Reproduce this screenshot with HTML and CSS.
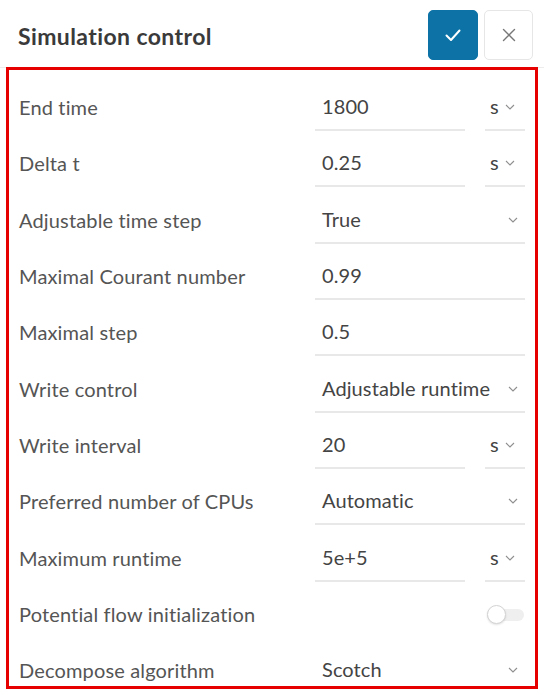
FILE: index.html
```html
<!DOCTYPE html>
<html>
<head>
<meta charset="utf-8">
<link rel="stylesheet" href="styles.css">
</head>
<body>
<div class="header">
  <div class="title">Simulation control</div>
  <div class="actions">
    <button class="btn btn-ok"><svg width="20" height="20" viewBox="0 0 20 20"><path d="M3.5 10.5 L8 15 L16.5 5.5" fill="none" stroke="#fff" stroke-width="2" stroke-linecap="round" stroke-linejoin="round"/></svg></button>
    <button class="btn btn-close"><svg width="14" height="14" viewBox="0 0 14 14"><path d="M1.5 1.5 L12.5 12.5 M12.5 1.5 L1.5 12.5" fill="none" stroke="#777" stroke-width="1.4" stroke-linecap="round"/></svg></button>
  </div>
</div>
<div class="panel">
  <div class="row"><div class="label">End time</div><div class="field">1800</div><div class="unit">s<svg class="chev" viewBox="0 0 10 6"><path d="M1 1 L5 5 L9 1"/></svg></div></div>
  <div class="row"><div class="label">Delta t</div><div class="field">0.25</div><div class="unit">s<svg class="chev" viewBox="0 0 10 6"><path d="M1 1 L5 5 L9 1"/></svg></div></div>
  <div class="row"><div class="label">Adjustable time step</div><div class="field wide">True<svg class="chev" viewBox="0 0 10 6"><path d="M1 1 L5 5 L9 1"/></svg></div></div>
  <div class="row"><div class="label">Maximal Courant number</div><div class="field wide">0.99</div></div>
  <div class="row"><div class="label">Maximal step</div><div class="field wide">0.5</div></div>
  <div class="row"><div class="label">Write control</div><div class="field wide">Adjustable runtime<svg class="chev" viewBox="0 0 10 6"><path d="M1 1 L5 5 L9 1"/></svg></div></div>
  <div class="row"><div class="label">Write interval</div><div class="field">20</div><div class="unit">s<svg class="chev" viewBox="0 0 10 6"><path d="M1 1 L5 5 L9 1"/></svg></div></div>
  <div class="row"><div class="label">Preferred number of CPUs</div><div class="field wide">Automatic<svg class="chev" viewBox="0 0 10 6"><path d="M1 1 L5 5 L9 1"/></svg></div></div>
  <div class="row"><div class="label">Maximum runtime</div><div class="field">5e+5</div><div class="unit">s<svg class="chev" viewBox="0 0 10 6"><path d="M1 1 L5 5 L9 1"/></svg></div></div>
  <div class="row"><div class="label">Potential flow initialization</div><div class="toggle-cell"><span class="toggle"><span class="knob"></span></span></div></div>
  <div class="row"><div class="label">Decompose algorithm</div><div class="field wide">Scotch<svg class="chev" viewBox="0 0 10 6"><path d="M1 1 L5 5 L9 1"/></svg></div></div>
</div>
</body>
</html>
```
FILE: styles.css
```css
* { box-sizing: border-box; }
html, body { margin: 0; padding: 0; background: #fff; }
body { font-family: Lato, "Open Sans", sans-serif; color: #555; width: 544px; height: 695px; overflow: hidden; }

.header {
  height: 68px;
  display: flex;
  align-items: center;
  justify-content: space-between;
  padding: 0 11px 0 18px;
  border-bottom: 1px solid #ececec;
}
.title { font-size: 23px; font-weight: 700; color: #3a3a3a; letter-spacing: 0.4px; margin-top: 4px; }
.actions { display: flex; gap: 6px; margin-top: 2px; }
.btn {
  width: 50px; height: 50px; border-radius: 5px; padding: 0;
  display: flex; align-items: center; justify-content: center; cursor: pointer;
}
.btn-ok { background: #0d73a7; border: 1px solid #0d73a7; }
.btn-close { background: #fff; border: 1px solid #e6e6e6; width: 49px; }

.panel {
  margin: -1px 6px 0 6px;
  height: 622px;
  border: 3px solid #e60000;
  padding: 9px 10px 0 10px;
  overflow: hidden;
}
.row {
  height: 56.3px;
  display: grid;
  grid-template-columns: 1fr 150px 40px;
  column-gap: 20px;
  align-items: center;
}
.label { font-size: 20px; letter-spacing: 0.15px; color: #555; white-space: nowrap; }
.field {
  height: 48px;
  border-bottom: 2px solid #e8e8e8;
  display: flex; align-items: center; justify-content: space-between;
  padding: 0 7px 0 7px;
  font-size: 20px; letter-spacing: 0.1px; color: #444;
  white-space: nowrap;
}
.field.wide { grid-column: 2 / span 2; }
.unit {
  height: 48px;
  border-bottom: 2px solid #e8e8e8;
  display: flex; align-items: center; justify-content: space-between;
  padding: 0 10px 0 5px;
  font-size: 20px; color: #444;
}
.chev {
  width: 10px; height: 6px;
  fill: none; stroke: #8f8f8f; stroke-width: 1.1;
  margin-top: 2px;
  flex: none;
}
.toggle-cell { grid-column: 2 / span 2; display: flex; justify-content: flex-end; padding-right: 1px; }
.toggle {
  position: relative;
  width: 37px; height: 12px; border-radius: 6px;
  background: #efefef;
  margin-top: 2px;
}
.knob {
  position: absolute; left: 0; top: -4px;
  width: 19px; height: 19px; border-radius: 50%;
  background: #fff; border: 1px solid #d4d4d4;
  box-shadow: 0 1px 2px rgba(0,0,0,0.12);
}
```
